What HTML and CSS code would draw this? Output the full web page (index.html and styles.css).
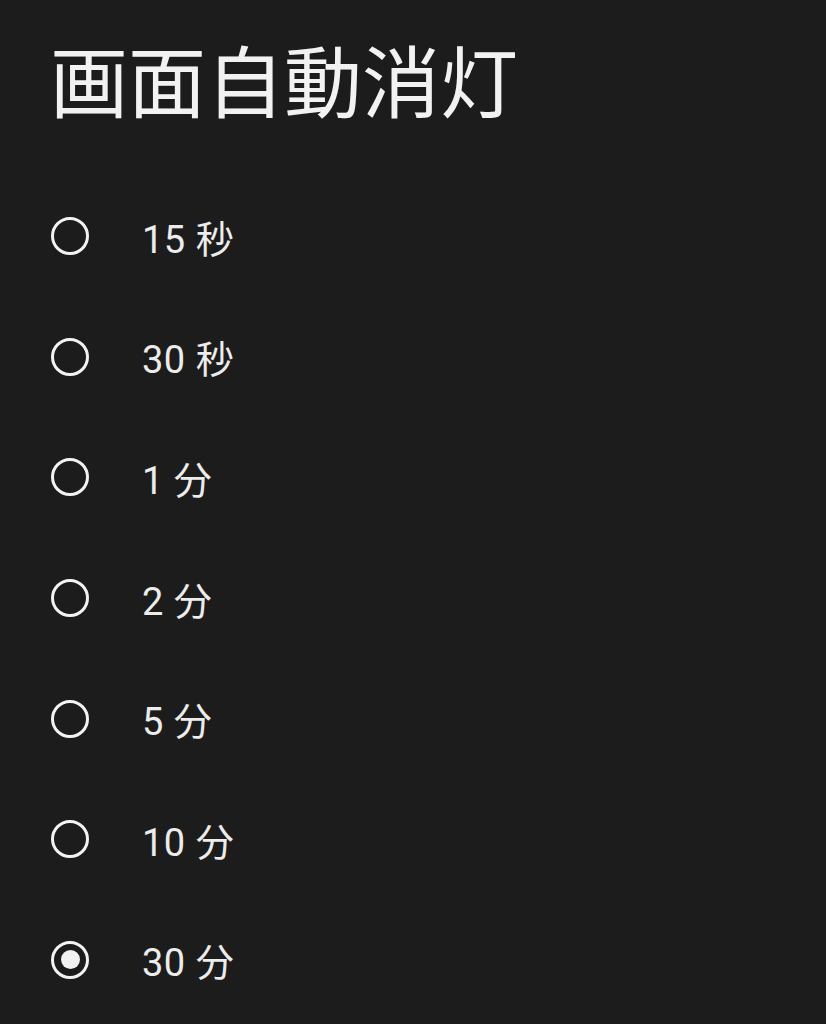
FILE: index.html
```html
<!DOCTYPE html>
<html lang="ja">
  <head>
    <meta charset="UTF-8" />
    <meta name="viewport" content="width=device-width, initial-scale=1.0" />
    <title>画面自動消灯</title>
    <link rel="stylesheet" href="styles.css">
  </head>
  <body>
    <div class="dialog">
      <h1 class="title">画面自動消灯</h1>
      <div class="options">
        <label class="option"><span class="radio"></span><span class="label">15 秒</span></label>
        <label class="option"><span class="radio"></span><span class="label">30 秒</span></label>
        <label class="option"><span class="radio"></span><span class="label">1 分</span></label>
        <label class="option"><span class="radio"></span><span class="label">2 分</span></label>
        <label class="option"><span class="radio"></span><span class="label">5 分</span></label>
        <label class="option"><span class="radio"></span><span class="label">10 分</span></label>
        <label class="option"><span class="radio checked"></span><span class="label">30 分</span></label>
      </div>
    </div>
  </body>
</html>
```

FILE: styles.css
```css
body {
    margin: 0;
    padding: 0;
    background: #1c1c1c;
    font-family: Roboto, "Noto Sans CJK JP", sans-serif;
    color: #ececec;
}

.dialog {
    padding: 40px 0 0 50px;
}

.title {
    margin: 0;
    font-size: 78px;
    font-weight: 400;
    line-height: 92px;
    color: #f2f2f2;
}

.options {
    display: flex;
    flex-direction: column;
    margin-top: 44px;
}

.option {
    display: flex;
    align-items: center;
    height: 120.6px;
}

.radio {
    box-sizing: border-box;
    width: 38px;
    height: 38px;
    margin-left: 1px;
    border: 3.5px solid #f2f2f2;
    border-radius: 50%;
    display: flex;
    align-items: center;
    justify-content: center;
}

.radio.checked::after {
    content: "";
    width: 19px;
    height: 19px;
    border-radius: 50%;
    background: #f2f2f2;
}

.label {
    margin-left: 53px;
    font-size: 38px;
    letter-spacing: 0.5px;
}
```
